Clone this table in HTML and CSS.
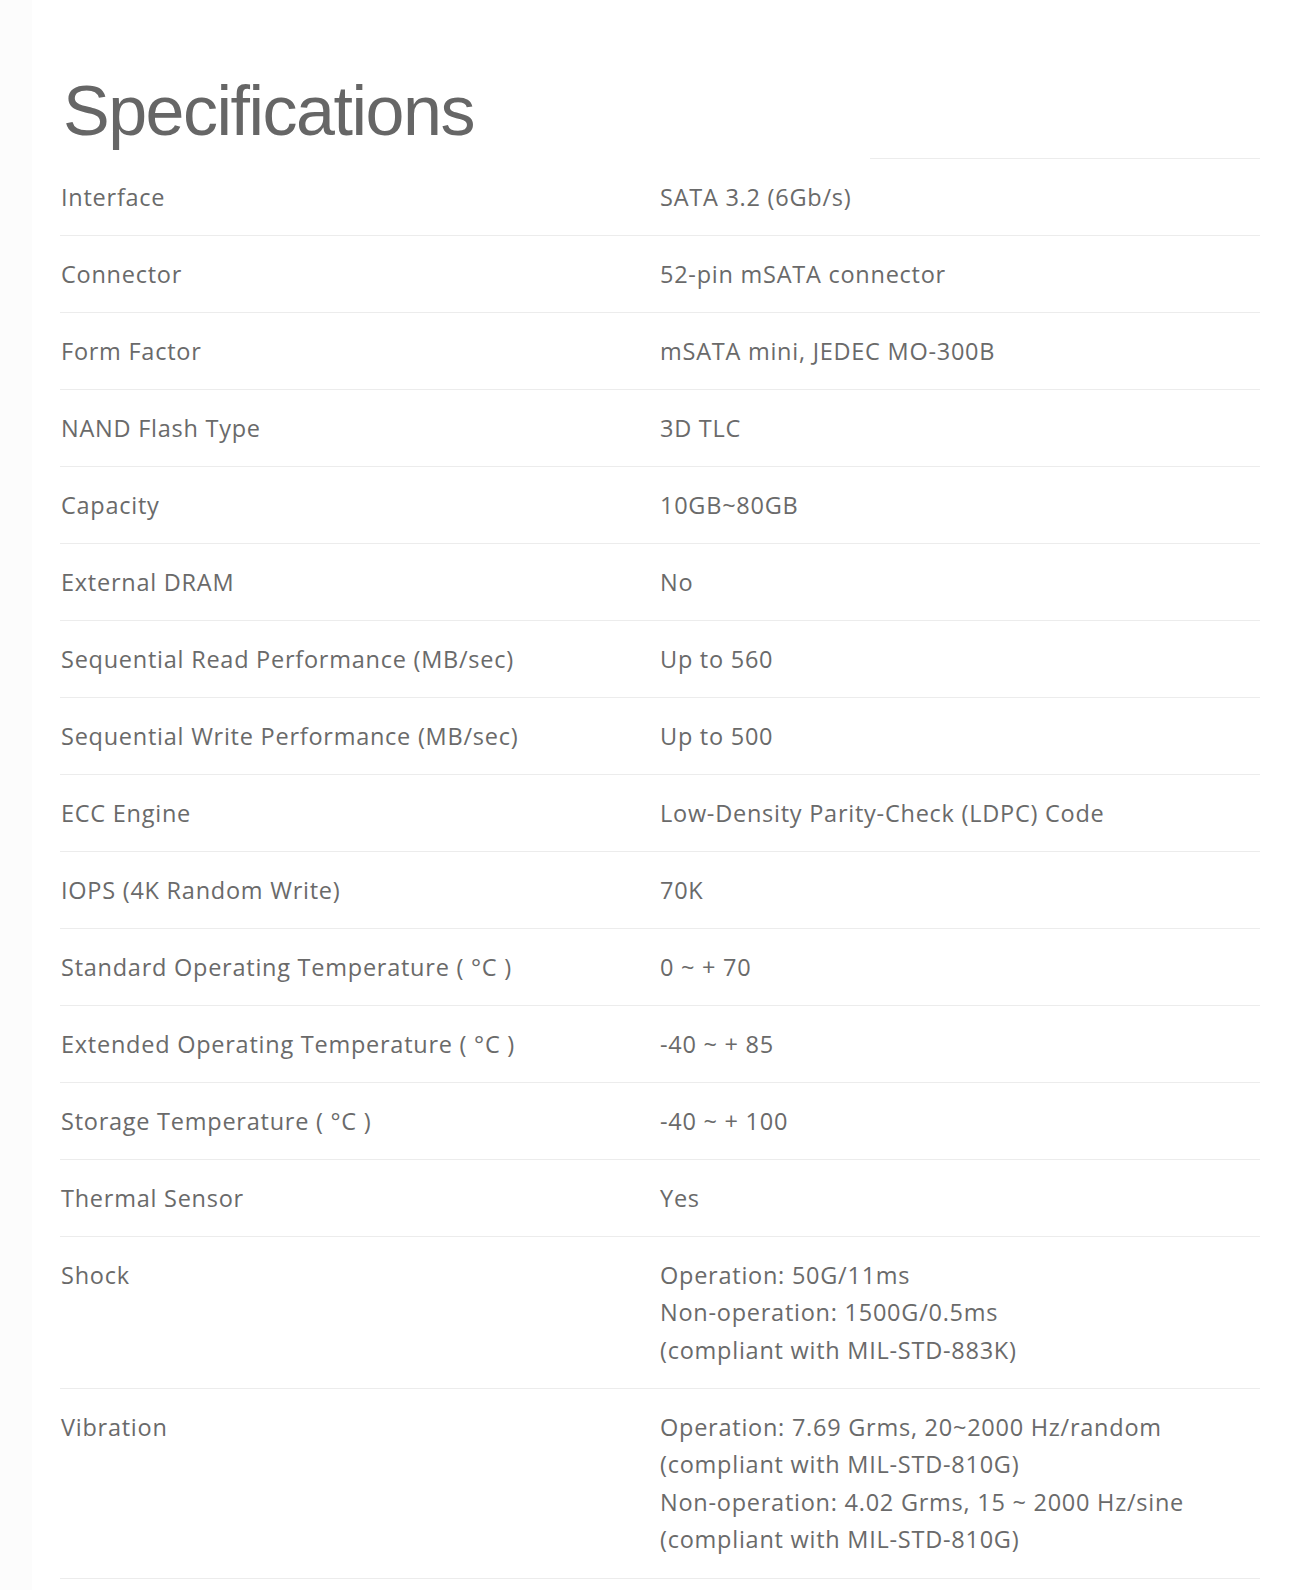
FILE: index.html
```html
<!DOCTYPE html>
<html lang="en">
  <head>
    <meta charset="UTF-8" />
    <meta name="viewport" content="width=device-width, initial-scale=1.0" />
    <title>Specifications</title>
    <link rel="stylesheet" href="styles.css">
  </head>
  <body>
    <div class="page">
      <h1 class="title">Specifications</h1>
      <div class="rule"></div>

      <div class="specs">
        <div class="row">
          <div class="label">Interface</div>
          <div class="value">SATA 3.2 (6Gb/s)</div>
        </div>
        <div class="row">
          <div class="label">Connector</div>
          <div class="value">52-pin mSATA connector</div>
        </div>
        <div class="row">
          <div class="label">Form Factor</div>
          <div class="value">mSATA mini, JEDEC MO-300B</div>
        </div>
        <div class="row">
          <div class="label">NAND Flash Type</div>
          <div class="value">3D TLC</div>
        </div>
        <div class="row">
          <div class="label">Capacity</div>
          <div class="value">10GB~80GB</div>
        </div>
        <div class="row">
          <div class="label">External DRAM</div>
          <div class="value">No</div>
        </div>
        <div class="row">
          <div class="label">Sequential Read Performance (MB/sec)</div>
          <div class="value">Up to 560</div>
        </div>
        <div class="row">
          <div class="label">Sequential Write Performance (MB/sec)</div>
          <div class="value">Up to 500</div>
        </div>
        <div class="row">
          <div class="label">ECC Engine</div>
          <div class="value">Low-Density Parity-Check (LDPC) Code</div>
        </div>
        <div class="row">
          <div class="label">IOPS (4K Random Write)</div>
          <div class="value">70K</div>
        </div>
        <div class="row">
          <div class="label">Standard Operating Temperature ( °C )</div>
          <div class="value">0 ~ + 70</div>
        </div>
        <div class="row">
          <div class="label">Extended Operating Temperature ( °C )</div>
          <div class="value">-40 ~ + 85</div>
        </div>
        <div class="row">
          <div class="label">Storage Temperature ( °C )</div>
          <div class="value">-40 ~ + 100</div>
        </div>
        <div class="row">
          <div class="label">Thermal Sensor</div>
          <div class="value">Yes</div>
        </div>
        <div class="row">
          <div class="label">Shock</div>
          <div class="value">
            Operation: 50G/11ms<br>
            Non-operation: 1500G/0.5ms<br>
            (compliant with MIL-STD-883K)
          </div>
        </div>
        <div class="row">
          <div class="label">Vibration</div>
          <div class="value">
            Operation: 7.69 Grms, 20~2000 Hz/random<br>
            (compliant with MIL-STD-810G)<br>
            Non-operation: 4.02 Grms, 15 ~ 2000 Hz/sine<br>
            (compliant with MIL-STD-810G)
          </div>
        </div>
      </div>
    </div>
  </body>
</html>
```

FILE: styles.css
```css
* {
  margin: 0;
  padding: 0;
  box-sizing: border-box;
}

body {
  font-family: "Open Sans", "Noto Sans", sans-serif;
  background-color: #fff;
  color: #6a6a6a;
}

.page {
  border-left: 32px solid #fcfcfc;
  padding: 76px 30px 0 28px;
  min-height: 100vh;
}

.title {
  font-family: "Liberation Sans", Arial, sans-serif;
  font-size: 70px;
  font-weight: 400;
  line-height: 70px;
  letter-spacing: -1.5px;
  color: #666;
  padding-left: 3px;
}

.rule {
  margin-top: 12px;
  margin-left: 810px;
  height: 1px;
  background-color: #ececec;
}

.specs {
  display: flex;
  flex-direction: column;
}

.row {
  display: grid;
  grid-template-columns: 600px 1fr;
  padding: 19.5px 0 19px;
  border-bottom: 1px solid #ececec;
  font-size: 23.5px;
  letter-spacing: 0.75px;
  line-height: 37.5px;
}

.label {
  padding-left: 1px;
}
```
